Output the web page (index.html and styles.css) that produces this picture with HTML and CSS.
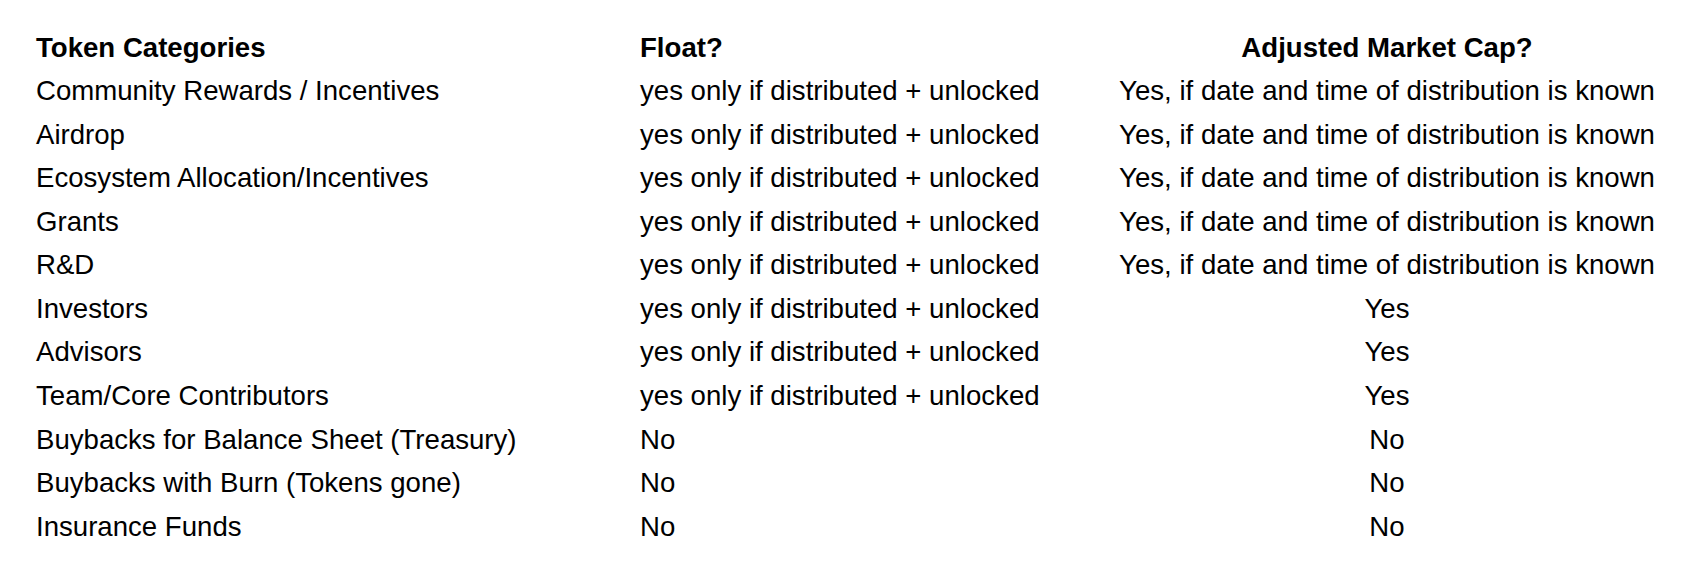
FILE: index.html
```html
<!DOCTYPE html>
<html>
<head>
<meta charset="utf-8">
<link rel="stylesheet" href="styles.css">
</head>
<body>
<div class="table">
  <div class="row head">
    <div class="c1">Token Categories</div>
    <div class="c2">Float?</div>
    <div class="c3">Adjusted Market Cap?</div>
  </div>
  <div class="row"><div class="c1">Community Rewards / Incentives</div><div class="c2">yes only if distributed + unlocked</div><div class="c3">Yes, if date and time of distribution is known</div></div>
  <div class="row"><div class="c1">Airdrop</div><div class="c2">yes only if distributed + unlocked</div><div class="c3">Yes, if date and time of distribution is known</div></div>
  <div class="row"><div class="c1">Ecosystem Allocation/Incentives</div><div class="c2">yes only if distributed + unlocked</div><div class="c3">Yes, if date and time of distribution is known</div></div>
  <div class="row"><div class="c1">Grants</div><div class="c2">yes only if distributed + unlocked</div><div class="c3">Yes, if date and time of distribution is known</div></div>
  <div class="row"><div class="c1">R&amp;D</div><div class="c2">yes only if distributed + unlocked</div><div class="c3">Yes, if date and time of distribution is known</div></div>
  <div class="row"><div class="c1">Investors</div><div class="c2">yes only if distributed + unlocked</div><div class="c3">Yes</div></div>
  <div class="row"><div class="c1">Advisors</div><div class="c2">yes only if distributed + unlocked</div><div class="c3">Yes</div></div>
  <div class="row"><div class="c1">Team/Core Contributors</div><div class="c2">yes only if distributed + unlocked</div><div class="c3">Yes</div></div>
  <div class="row"><div class="c1">Buybacks for Balance Sheet (Treasury)</div><div class="c2">No</div><div class="c3">No</div></div>
  <div class="row"><div class="c1">Buybacks with Burn (Tokens gone)</div><div class="c2">No</div><div class="c3">No</div></div>
  <div class="row"><div class="c1">Insurance Funds</div><div class="c2">No</div><div class="c3">No</div></div>
</div>
</body>
</html>
```
FILE: styles.css
```css
html, body {
  margin: 0;
  padding: 0;
  background: #ffffff;
}
body {
  font-family: "Liberation Sans", Arial, sans-serif;
  font-size: 27.6px;
  color: #000000;
}
.table {
  padding: 25.6px 0 0 36px;
  display: flex;
  flex-direction: column;
}
.row {
  display: grid;
  grid-template-columns: 604px 460px 574px;
  line-height: 43.55px;
  height: 43.55px;
  white-space: nowrap;
}
.head {
  font-weight: bold;
}
.c3 {
  text-align: center;
}
```
